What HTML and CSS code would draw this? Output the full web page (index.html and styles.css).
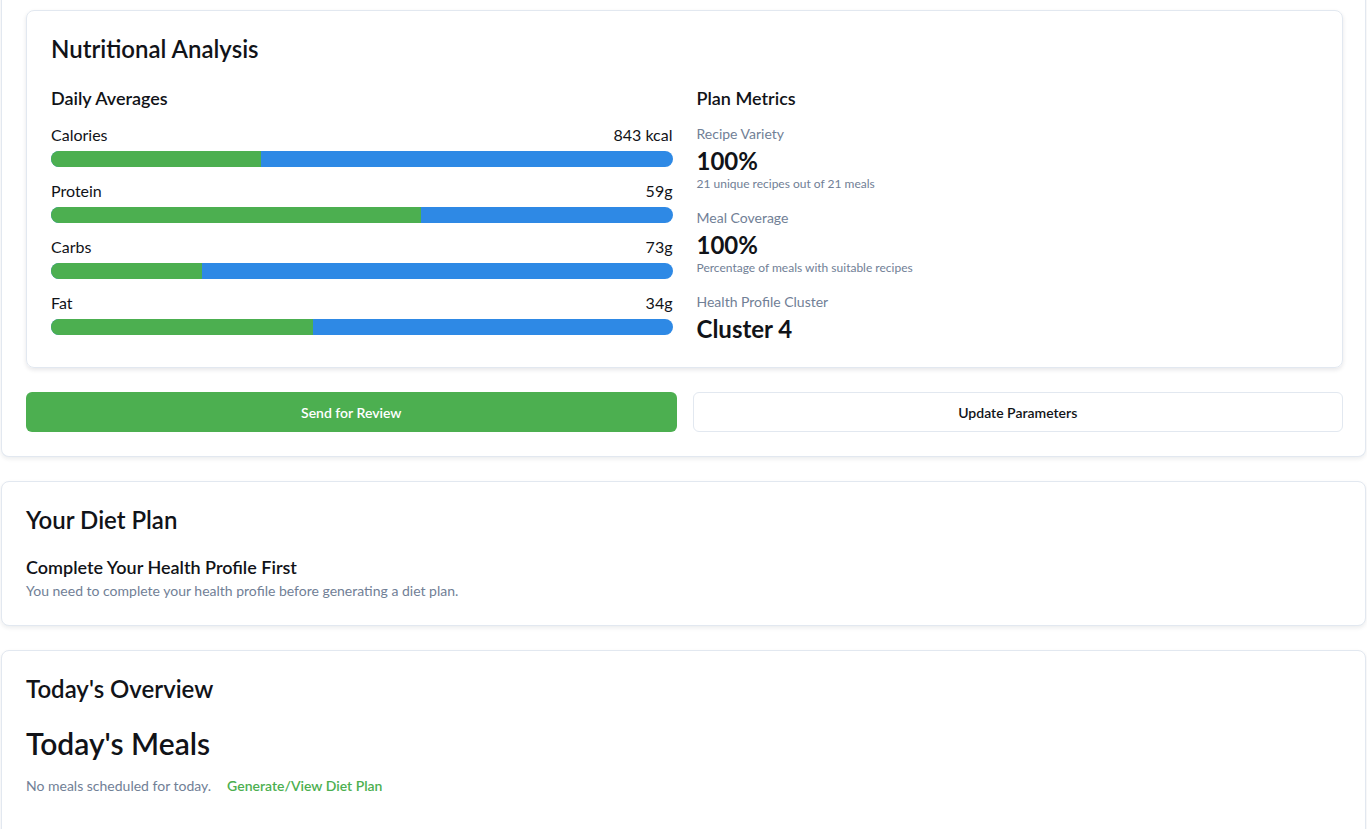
FILE: index.html
```html
<!DOCTYPE html>
<html lang="en">
<head>
<meta charset="utf-8">
<title>Dashboard</title>
<link rel="stylesheet" href="styles.css">
</head>
<body>
<main class="page">
  <section class="card card-first">
    <div class="analysis">
      <h2 class="analysis-title">Nutritional Analysis</h2>
      <div class="analysis-grid">
        <div class="col">
          <h3 class="col-title">Daily Averages</h3>
          <div class="nutrient">
            <div class="nutrient-head"><span>Calories</span><span>843 kcal</span></div>
            <div class="bar"><div class="bar-fill" style="width:33.8%"></div></div>
          </div>
          <div class="nutrient">
            <div class="nutrient-head"><span>Protein</span><span>59g</span></div>
            <div class="bar"><div class="bar-fill" style="width:59.5%"></div></div>
          </div>
          <div class="nutrient">
            <div class="nutrient-head"><span>Carbs</span><span>73g</span></div>
            <div class="bar"><div class="bar-fill" style="width:24.3%"></div></div>
          </div>
          <div class="nutrient">
            <div class="nutrient-head"><span>Fat</span><span>34g</span></div>
            <div class="bar"><div class="bar-fill" style="width:42.1%"></div></div>
          </div>
        </div>
        <div class="col">
          <h3 class="col-title">Plan Metrics</h3>
          <div class="metrics">
            <div class="metric">
              <div class="metric-label">Recipe Variety</div>
              <div class="metric-value">100%</div>
              <div class="metric-sub">21 unique recipes out of 21 meals</div>
            </div>
            <div class="metric">
              <div class="metric-label">Meal Coverage</div>
              <div class="metric-value">100%</div>
              <div class="metric-sub">Percentage of meals with suitable recipes</div>
            </div>
            <div class="metric">
              <div class="metric-label">Health Profile Cluster</div>
              <div class="metric-value">Cluster 4</div>
            </div>
          </div>
        </div>
      </div>
    </div>
    <div class="actions">
      <button class="btn btn-primary">Send for Review</button>
      <button class="btn btn-outline">Update Parameters</button>
    </div>
  </section>

  <section class="card">
    <h2 class="card-title">Your Diet Plan</h2>
    <h3 class="notice-title">Complete Your Health Profile First</h3>
    <p class="notice-text">You need to complete your health profile before generating a diet plan.</p>
  </section>

  <section class="card card-last">
    <h2 class="card-title">Today's Overview</h2>
    <h2 class="meals-title">Today's Meals</h2>
    <div class="empty">
      <span class="empty-text">No meals scheduled for today.</span>
      <a class="link" href="#">Generate/View Diet Plan</a>
    </div>
  </section>
</main>
</body>
</html>
```

FILE: styles.css
```css
* { box-sizing: border-box; }

html, body {
  margin: 0;
  padding: 0;
  background: #ffffff;
}

body {
  font-family: "Lato", "Noto Sans", sans-serif;
  color: #111318;
  overflow: hidden;
}

.page {
  width: 1366px;
  padding-left: 1px;
}

.card {
  background: #fff;
  border: 1px solid #e2e8f0;
  border-radius: 8px;
  box-shadow: 0 2px 4px rgba(15, 23, 42, 0.08);
  padding: 24px 22px 24px 24px;
  margin-bottom: 24px;
}

.card-first {
  margin-top: -40px;
  padding-top: 50px;
  border-top: none;
}

.card-last {
  padding-bottom: 56px;
}

.analysis {
  border: 1px solid #e2e8f0;
  border-radius: 8px;
  box-shadow: 0 2px 4px rgba(15, 23, 42, 0.10);
  padding: 24px;
}

.analysis-title {
  margin: 0 0 24px;
  font-size: 24px;
  line-height: 28px;
  font-weight: 600;
}

.analysis-grid {
  display: grid;
  grid-template-columns: 1fr 1fr;
  column-gap: 24px;
}

.col-title {
  margin: 0 0 14px;
  font-size: 18px;
  line-height: 22px;
  font-weight: 600;
}

.nutrient {
  margin-bottom: 12px;
}

.nutrient:last-child { margin-bottom: 0; }

.nutrient-head {
  display: flex;
  justify-content: space-between;
  font-size: 16px;
  line-height: 24px;
  margin-bottom: 4px;
}

.bar {
  height: 16px;
  border-radius: 8px;
  background: #2e89e5;
  overflow: hidden;
}

.bar-fill {
  height: 100%;
  background: #4caf50;
}

.metrics {
  padding-top: 1px;
}

.metric {
  margin-bottom: 16px;
}

.metric:last-child { margin-bottom: 0; }

.metric-label {
  font-size: 14px;
  line-height: 20px;
  color: #718096;
}

.metric-value {
  margin-top: 2px;
  font-size: 24px;
  line-height: 29px;
  font-weight: 700;
}

.metric-sub {
  margin-top: 1px;
  font-size: 12px;
  line-height: 16px;
  color: #718096;
}

.actions {
  display: grid;
  grid-template-columns: 1fr 1fr;
  column-gap: 16px;
  margin-top: 24px;
}

.btn {
  height: 40px;
  border-radius: 6px;
  font-family: inherit;
  font-size: 14px;
  font-weight: 600;
  cursor: pointer;
}

.btn-primary {
  background: #4caf50;
  color: #fff;
  border: none;
}

.btn-outline {
  background: #fff;
  color: #111318;
  border: 1px solid #e2e8f0;
}

.card-title {
  margin: 0 0 22px;
  font-size: 24px;
  line-height: 28px;
  font-weight: 600;
}

.notice-title {
  margin: 0 0 3px;
  font-size: 18px;
  line-height: 22px;
  font-weight: 600;
}

.notice-text {
  margin: 0;
  font-size: 14px;
  line-height: 20px;
  color: #718096;
}

.meals-title {
  margin: 0 0 15px;
  font-size: 30px;
  line-height: 36px;
  font-weight: 600;
}

.empty {
  display: flex;
  align-items: center;
  font-size: 14px;
  line-height: 20px;
}

.empty-text {
  color: #718096;
}

.link {
  margin-left: 16px;
  color: #4caf50;
  font-weight: 600;
  text-decoration: none;
}
```
